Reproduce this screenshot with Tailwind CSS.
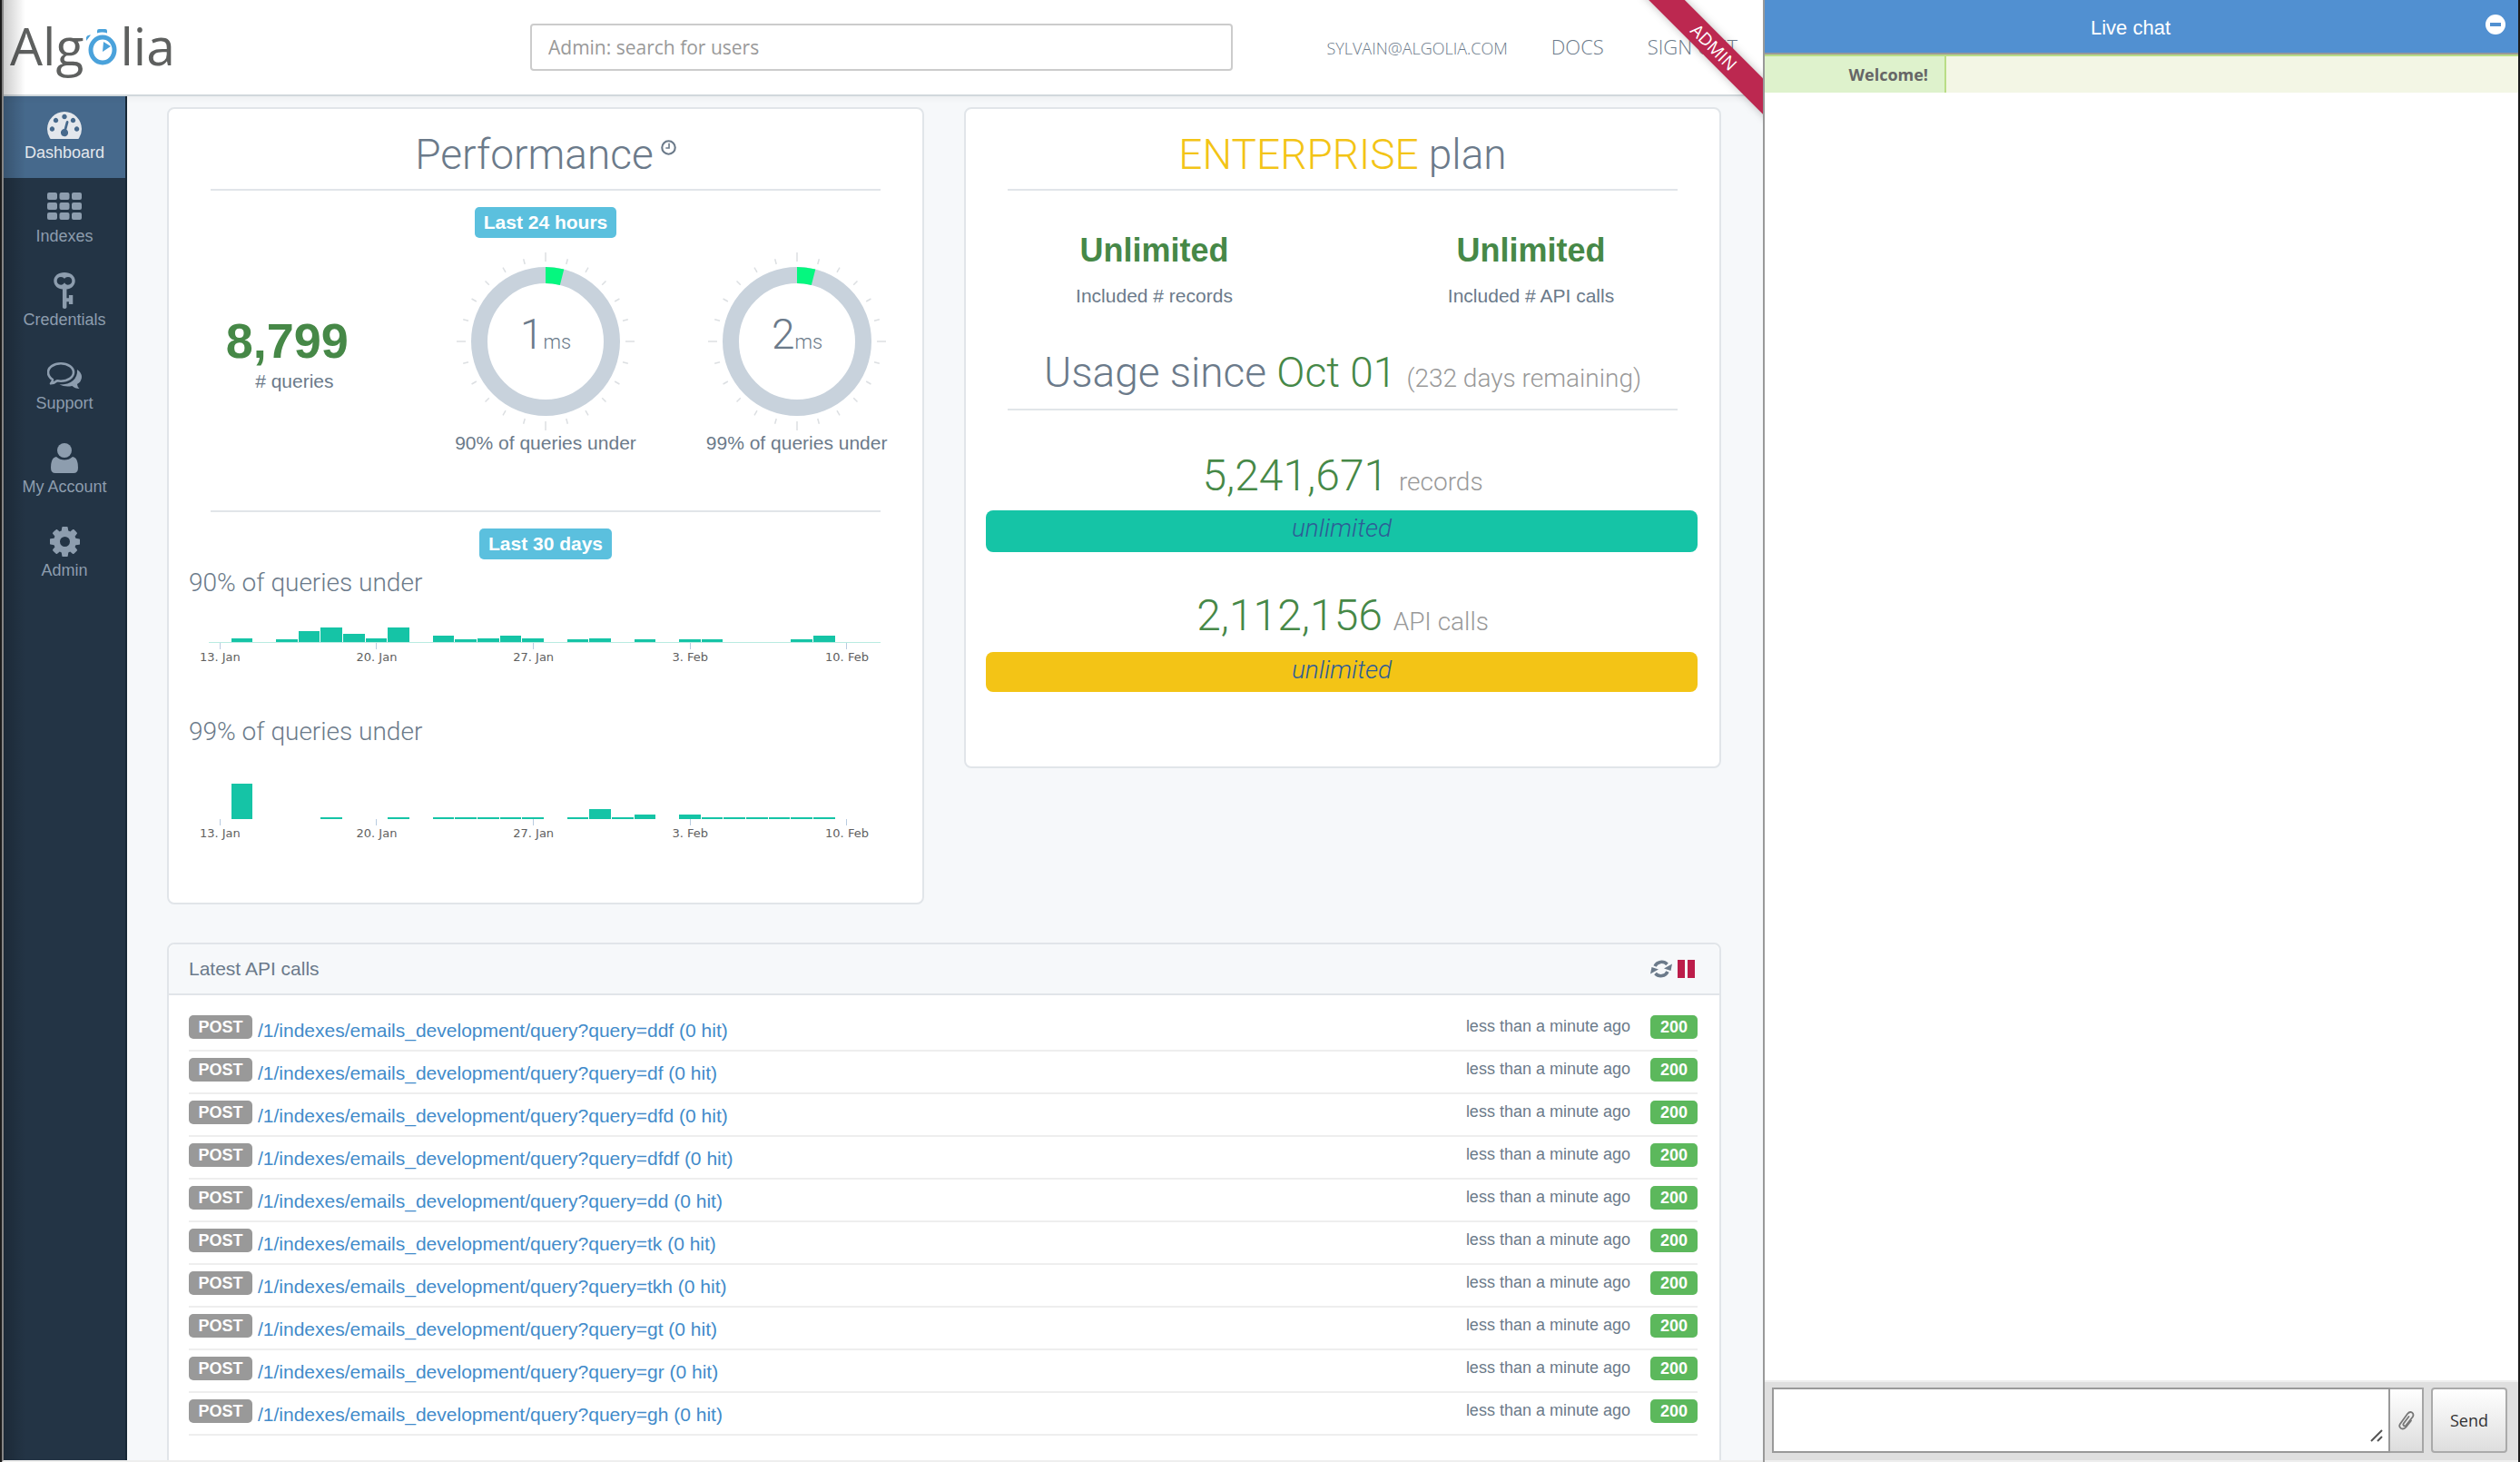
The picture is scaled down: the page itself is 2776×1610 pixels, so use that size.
<!DOCTYPE html>
<html lang="en">
  <head>
    <meta charset="utf-8" />
    <meta content="width=device-width, initial-scale=1.0" name="viewport" />
    <title>Algolia - Dashboard</title>
    <script src="https://cdn.jsdelivr.net/npm/@tailwindcss/browser@4"></script>
  </head>
  <body class="flex h-screen overflow-hidden border-r-2 border-l-2 border-[#1b1b1b] bg-[#f6f8fa] font-['Liberation_Sans',sans-serif] text-[21px] leading-7 text-[#6b7a8a]">
    <div class="relative flex min-w-0 flex-1 flex-col overflow-hidden border-b-2 border-l-2 border-b-[#eeeeee] border-l-[#858585]">
      <!-- Window edge shade -->
      <div class="pointer-events-none absolute inset-y-0 left-0 z-20 w-6 bg-linear-to-r from-black/20 to-transparent"></div>

      <header class="relative flex h-[106px] shrink-0 items-center border-b-2 border-[#d1d8dc] bg-white font-['Open_Sans',sans-serif] shadow-[0_1px_8px_rgba(0,0,0,0.06)]">
        <a href="#" class="flex w-[580px] shrink-0 items-baseline pb-1 pl-[7px] text-[57px] leading-[80px] text-[#5e605f]" aria-label="Algolia">
          <span>Alg</span>
          <svg class="mx-[3px] h-10 w-[34px]" viewBox="0 0 34 40" fill="none">
            <ellipse cx="18" cy="23" rx="13" ry="14" stroke="#4aa2db" stroke-width="5" />
            <path d="M12 4.500V2q0-2 2-2h7q2 0 2 2v2.500q-5.500-2-11 0z" fill="#4aa2db" />
            <path d="M0 13V9q1-3 5-2.500z" fill="#4aa2db" />
            <path d="M19 14l8 5-9 6z" fill="#4aa2db" />
          </svg>
          <span>lia</span>
        </a>
        <label for="search" class="sr-only">Search for users</label>
        <input type="text" id="search" placeholder="Admin: search for users" class="h-[52px] w-[774px] rounded-[4px] border-2 border-[#cccccc] bg-white px-[18px] text-[21px] placeholder:text-[#999999]" />
        <nav class="ml-auto pr-[28px]">
          <ul class="flex items-baseline gap-[48px] text-[22px] font-light">
            <li><a href="#" class="text-[18px]">SYLVAIN@ALGOLIA.COM</a></li>
            <li><a href="#">DOCS</a></li>
            <li><a href="#">SIGN OUT</a></li>
          </ul>
        </nav>
      </header>

      <div class="absolute top-[38px] -right-[46px] z-10 h-7 w-[200px] rotate-45 bg-[#bc2850] text-center font-['Open_Sans',sans-serif] text-[19px] leading-7 text-white shadow-[0_0_10px_rgba(0,0,0,0.25)]">ADMIN</div>

      <div class="flex min-h-0 flex-1">
        <aside class="w-[136px] shrink-0 border-r-2 border-[#172735] bg-[#233445] text-center text-[18px] leading-6 text-[#8d9dae]">
          <ul>
            <li class="h-[92px]">
              <a href="#" class="flex h-[90px] flex-col items-center bg-[#46698c] pt-4 text-[#e3e7ec]">
                <svg class="h-8 w-[38px]" viewBox="0 256 1792 1408" fill="currentColor">
                  <path d="M384 1152q0-53-37.500-90.500t-90.500-37.500-90.500 37.500-37.500 90.500 37.500 90.500 90.500 37.500 90.500-37.500 37.500-90.500zm192-448q0-53-37.500-90.500t-90.500-37.500-90.500 37.500-37.500 90.500 37.500 90.500 90.500 37.500 90.500-37.500 37.500-90.500zm428 481l101-382q6-26-7.500-48.500t-38.500-29.500-48 6.500-30 39.500l-101 382q-60 5-107 43.500t-63 98.500q-20 77 20 146t117 89 146-20 89-117q16-60-6-117t-72-91zm660-33q0-53-37.500-90.500t-90.500-37.500-90.500 37.500-37.500 90.500 37.500 90.500 90.500 37.500 90.500-37.500 37.500-90.500zm-640-640q0-53-37.500-90.500t-90.500-37.500-90.500 37.500-37.500 90.500 37.500 90.500 90.500 37.500 90.500-37.500 37.500-90.500zm448 192q0-53-37.500-90.500t-90.500-37.500-90.500 37.500-37.500 90.500 37.500 90.500 90.500 37.500 90.500-37.500 37.500-90.500zm320 448q0 261-141 483-19 29-54 29h-1402q-35 0-54-29-141-221-141-483 0-182 71-348t191-286 286-191 348-71 348 71 286 191 191 286 71 348z" />
                </svg>
                <span class="mt-[2px]">Dashboard</span>
              </a>
            </li>
            <li class="h-[92px]">
              <a href="#" class="flex flex-col items-center pt-[14px]">
                <svg class="h-[30px] w-[38px]" viewBox="0 0 38 30" fill="currentColor">
                  <rect width="11" height="8" rx="2" /><rect x="13.500" width="11" height="8" rx="2" /><rect x="27" width="11" height="8" rx="2" />
                  <rect y="11" width="11" height="8" rx="2" /><rect x="13.500" y="11" width="11" height="8" rx="2" /><rect x="27" y="11" width="11" height="8" rx="2" />
                  <rect y="22" width="11" height="8" rx="2" /><rect x="13.500" y="22" width="11" height="8" rx="2" /><rect x="27" y="22" width="11" height="8" rx="2" />
                </svg>
                <span class="mt-[6px]">Indexes</span>
              </a>
            </li>
            <li class="h-[92px]">
              <a href="#" class="flex flex-col items-center pt-[10px]">
                <svg class="h-10 w-6" viewBox="0 0 24 41" fill="currentColor">
                  <path fill-rule="evenodd" d="M12 0c7 0 12 4 12 9.500S19 19 14.500 19v10H17v-3.500h4.500V36H17v-3h-2.500v6.500q0 1.500-2.300 1.500t-2.300-1.500V19C5 19 0 15 0 9.500S5 0 12 0zM8 5c-3 0-4.500 2-4.500 4.500S5 14 8 14c2 0 3-1 4-2.500C13 13 14 14 16 14c3 0 4.500-2 4.500-4.500S19 5 16 5c-2 0-3 .800-4 2-1-1.200-2-2-4-2z" />
                </svg>
                <span>Credentials</span>
              </a>
            </li>
            <li class="h-[92px]">
              <a href="#" class="flex flex-col items-center pt-[17px]">
                <svg class="h-[30px] w-[38px]" viewBox="0 0 38 30">
                  <path d="M15 1.300c8 0 14 4.300 14 9.700s-6 9.700-14 9.700q-2 0-4-.400-3 2.700-7 3 2-2 2-4.300C3 17 1 14.300 1 11 1 5.600 7 1.300 15 1.300z" fill="none" stroke="currentColor" stroke-width="2.600" stroke-linejoin="round" />
                  <path d="M33 8q5 3.500 5 8 0 5-5 8 0 2.500 2.500 5-5 0-8-3-8 1.500-14-1.500 10 0 15-4.500T33 8z" fill="currentColor" />
                </svg>
                <span class="mt-[3px]">Support</span>
              </a>
            </li>
            <li class="h-[92px]">
              <a href="#" class="flex flex-col items-center pt-[14px]">
                <svg class="h-[33px] w-[30px]" viewBox="0 0 30 33" fill="currentColor">
                  <circle cx="15" cy="8" r="8" />
                  <path d="M6 15q4 3.500 9 3.500t9-3.500q6 1 6 12 0 6-5 6H5q-5 0-5-6 0-11 6-12z" />
                </svg>
                <span class="mt-[3px]">My Account</span>
              </a>
            </li>
            <li class="h-[92px]">
              <a href="#" class="flex flex-col items-center pt-[14px]">
                <svg class="size-[33px]" viewBox="128 128 1536 1536" fill="currentColor">
                  <path d="M1152 896q0-106-75-181t-181-75-181 75-75 181 75 181 181 75 181-75 75-181zm512-109v222q0 12-8 23t-20 13l-185 28q-19 54-39 91 35 50 107 138 10 12 10 25t-9 23q-27 37-99 108t-94 71q-12 0-26-9l-138-108q-44 23-91 38-16 136-29 186-7 28-36 28h-222q-14 0-24.500-8.500t-11.500-21.500l-28-184q-49-16-90-37l-141 107q-10 9-25 9-14 0-25-11-126-114-165-168-7-10-7-23 0-12 8-23 15-21 51-66.500t54-70.500q-27-50-41-99l-183-27q-13-2-21-12.500t-8-23.500v-222q0-12 8-23t19-13l186-28q14-46 39-92-40-57-107-138-10-12-10-24 0-10 9-23 26-36 98.500-107.500t94.500-71.500q13 0 26 10l138 107q44-23 91-38 16-136 29-186 7-28 36-28h222q14 0 24.500 8.500t11.500 21.500l28 184q49 16 90 37l142-107q9-9 24-9 13 0 25 10 129 119 165 170 7 8 7 22 0 12-8 23-15 21-51 66.500t-54 70.500q26 50 41 98l183 28q13 2 21 12.500t8 23.500z" />
                </svg>
                <span class="mt-[3px]">Admin</span>
              </a>
            </li>
          </ul>
        </aside>

        <main class="min-w-0 flex-1 overflow-hidden pt-3 pr-[46px] pl-11">
          <div class="grid grid-cols-2 items-start gap-11">
            <!-- Performance -->
            <section class="rounded-lg border-2 border-[#e1e5e9] bg-white pt-5 pb-[42px]">
              <h1 class="flex justify-center font-['Roboto',sans-serif] text-[46px] leading-[60px] font-light">
                Performance
                <svg class="mt-[14px] ml-2 size-[17px]" viewBox="0 0 16 16" fill="none" stroke="currentColor" stroke-width="2">
                  <circle cx="8" cy="8" r="6.800" />
                  <path d="M8.500 3.500v5h-3.500" stroke-width="1.500" />
                </svg>
              </h1>
              <hr class="mx-[46px] mt-2 border-t-2 border-[#e1e5e9]" />
              <div class="mt-[18px] flex justify-center">
                <span class="rounded-[5px] bg-[#5bc0de] px-[10px] leading-[34px] font-bold text-white">Last 24 hours</span>
              </div>
              <div class="mt-4 grid grid-cols-3 text-center">
                <div class="pt-[66px]">
                  <p class="pr-4 text-[54px] leading-[62px] font-bold text-[#468847]">8,799</p>
                  <p># queries</p>
                </div>
                <div class="flex flex-col items-center">
                  <svg class="gauge size-[196px]" viewBox="-98 -98 196 196" data-value="1"></svg>
                  <p>90% of queries under</p>
                </div>
                <div class="flex flex-col items-center">
                  <svg class="gauge size-[196px]" viewBox="-98 -98 196 196" data-value="2"></svg>
                  <p>99% of queries under</p>
                </div>
              </div>
              <hr class="mx-[46px] mt-[60px] border-t-2 border-[#e1e5e9]" />
              <div class="mt-[18px] flex justify-center">
                <span class="rounded-[5px] bg-[#5bc0de] px-[10px] leading-[34px] font-bold text-white">Last 30 days</span>
              </div>
              <h2 class="mt-2 px-[22px] font-['Roboto',sans-serif] text-[28px] leading-9 font-light">90% of queries under</h2>
              <div class="mr-[46px] ml-11 h-32">
                <div id="chart-90" class="grid h-12 grid-cols-30 items-end border-b border-[#b9ebe1]"></div>
                <div class="axis grid grid-cols-30"></div>
              </div>
              <h2 class="px-[22px] font-['Roboto',sans-serif] text-[28px] leading-9 font-light">99% of queries under</h2>
              <div class="mr-[46px] ml-11 h-32">
                <div id="chart-99" class="grid h-[78px] grid-cols-30 items-end"></div>
                <div class="axis grid grid-cols-30"></div>
              </div>
            </section>

            <!-- Plan -->
            <section class="rounded-lg border-2 border-[#e1e5e9] bg-white pt-5 pb-[82px] text-center">
              <h1 class="font-['Roboto',sans-serif] text-[46px] leading-[60px] font-light"><span class="text-[#f3c416]">ENTERPRISE</span> plan</h1>
              <hr class="mx-[46px] mt-2 border-t-2 border-[#e1e5e9]" />
              <div class="mt-11 grid grid-cols-2">
                <div>
                  <p class="text-[36px] leading-[44px] font-bold text-[#468847]">Unlimited</p>
                  <p class="mt-[14px]">Included # records</p>
                </div>
                <div>
                  <p class="text-[36px] leading-[44px] font-bold text-[#468847]">Unlimited</p>
                  <p class="mt-[14px]">Included # API calls</p>
                </div>
              </div>
              <h2 class="mt-10 font-['Roboto',sans-serif] text-[46px] leading-[60px] font-light">Usage since <span class="text-[#468847]">Oct 01</span> <small class="text-[28px] leading-none text-[#999999]">(232 days remaining)</small></h2>
              <hr class="mx-[46px] mt-[10px] border-t-2 border-[#e1e5e9]" />
              <p class="mt-[42px] font-['Roboto',sans-serif] text-[48px] leading-[60px] font-light text-[#468847]">5,241,671 <small class="text-[28px] leading-none text-[#999999]">records</small></p>
              <div class="mt-2 mr-6 ml-[22px] h-[46px] rounded-lg bg-[#15c4a6] font-['Roboto',sans-serif] text-[28px] leading-10 font-light text-[#2e5c96] italic">unlimited</div>
              <p class="mt-10 font-['Roboto',sans-serif] text-[48px] leading-[60px] font-light text-[#468847]">2,112,156 <small class="text-[28px] leading-none text-[#999999]">API calls</small></p>
              <div class="mt-[10px] mr-6 ml-[22px] h-11 rounded-lg bg-[#f3c416] font-['Roboto',sans-serif] text-[28px] leading-10 font-light text-[#2e5c96] italic">unlimited</div>
            </section>
          </div>

          <!-- Latest API calls -->
          <section class="mt-[42px] h-[640px] rounded-lg border-2 border-[#e1e5e9] bg-white">
            <div class="flex h-14 items-center rounded-t-lg border-b-2 border-[#e1e5e9] bg-[#f6f8fa] pr-6 pl-[22px]">
              <h2>Latest API calls</h2>
              <button type="button" class="mr-[6px] ml-auto" aria-label="Refresh">
                <svg class="block h-5 w-6" viewBox="0 0 24 20">
                  <path d="M5 7a8 7.500 0 0 1 13.500-2M19 13a8 7.500 0 0 1-13.500 2" fill="none" stroke="currentColor" stroke-width="3.500" />
                  <path d="M24 4.500L22.500 12 15 9.500zM0 15.500L1.500 8 9 10.500z" fill="currentColor" />
                </svg>
              </button>
              <button type="button" class="mr-[3px] flex gap-[3px]" aria-label="Pause">
                <span class="h-5 w-2 bg-[#bc1d4a]"></span>
                <span class="h-5 w-2 bg-[#bc1d4a]"></span>
              </button>
            </div>
            <ul id="calls" class="pt-[15px] pr-6 pl-[22px]"></ul>
          </section>
        </main>
      </div>
    </div>

    <!-- Live chat -->
    <aside class="flex w-[832px] shrink-0 flex-col border-l-2 border-[#999999] bg-white">
      <div class="relative flex h-[60px] shrink-0 items-center justify-center border-b-2 border-[#999999] bg-[#5190d1] pt-1 pr-6 text-[22px] text-white">
        Live chat
        <button type="button" class="absolute top-4 right-[14px] flex size-[22px] items-center justify-center rounded-full bg-white" aria-label="Minimize">
          <span class="h-1 w-3 bg-[#5190d1]"></span>
        </button>
      </div>
      <div class="flex h-[42px] shrink-0 border-t-2 border-[#b9dd86] bg-[#f3f6e5] font-['Open_Sans',sans-serif] text-[18px] font-bold text-[#666666]">
        <div class="flex w-[200px] items-center justify-end border-r-2 border-[#b9dd86] bg-[#def2cc] pr-[18px]">Welcome!</div>
      </div>
      <div class="flex-1"></div>
      <form class="flex h-[90px] shrink-0 border-t-2 border-b-2 border-[#eeeeee] bg-[#dfdfdf] pt-[6px] pr-3 pb-2 pl-2 font-['Open_Sans',sans-serif]">
        <label for="message" class="sr-only">Message</label>
        <div class="relative flex-1">
          <textarea id="message" class="block h-full w-full resize-none border-2 border-[#999999] bg-white"></textarea>
          <svg class="absolute right-2 bottom-3 h-[14px] w-[14px]" viewBox="0 0 14 14" stroke="#555" stroke-width="2"><path d="M1 13L13 1M8 13l5-5" /></svg>
        </div>
        <button type="button" class="flex w-[37px] items-center justify-center border-2 border-l-0 border-[#a5a5a5] bg-linear-to-b from-white to-[#dddddd]" aria-label="Attach">
          <svg class="h-[21px] w-[19px]" viewBox="0 0 19 21" fill="none" stroke="#777" stroke-width="1.800" stroke-linecap="round">
            <path d="M15 10.500l-5.500 7q-2.500 3-5.500 1.500-3-2-1-5L11 3q2.500-3 5-1.500 2.300 1.500 1 4.500l-7.500 9.500q-1.300 1.500-2.500.500t-.200-2.500l5.700-7.500" />
          </svg>
        </button>
        <button type="submit" class="ml-2 w-[84px] rounded-[4px] border-2 border-[#aaaaaa] bg-linear-to-b from-white to-[#dedede] text-[18px] text-[#333333]">Send</button>
      </form>
    </aside>

    <script>
      // Gauges
      document.querySelectorAll(".gauge").forEach((svg) => {
        let ticks = "";
        for (let i = 0; i < 24; i++) {
          ticks += `<line y1="${i % 6 === 0 ? -98 : -94}" y2="-88" transform="rotate(${i * 15})" stroke="#dcdfe2" stroke-width="1.500" />`;
        }
        svg.innerHTML = `${ticks}
          <circle r="73" fill="none" stroke="#c8d2dc" stroke-width="18" />
          <circle r="73" fill="none" stroke="#05f77f" stroke-width="18" pathLength="100" stroke-dasharray="4 96" transform="rotate(-90)" />
          <text y="8" text-anchor="middle" fill="currentColor" class="font-['Roboto',sans-serif] text-[46px] font-light">${svg.dataset.value}<tspan class="text-[22px]">ms</tspan></text>`;
      });

      // Charts, bar heights in pixels for each of the 30 days
      const series = {
        "chart-90": [0, 4, 0, 3, 12, 16, 9, 4, 16, 0, 7, 3, 4, 7, 4, 0, 3, 4, 0, 3, 0, 3, 3, 0, 0, 0, 3, 7, 0, 0],
        "chart-99": [0, 39, 0, 0, 0, 2, 0, 0, 2, 0, 2, 2, 2, 2, 2, 0, 2, 11, 2, 5, 0, 5, 2, 2, 2, 2, 2, 2, 0, 0],
      };
      for (const id in series) {
        document.getElementById(id).innerHTML = series[id].map((h) => `<div class="mr-px bg-[#15c4a6]" style="height: ${h}px"></div>`).join("");
      }

      const days = { 0: "13. Jan", 7: "20. Jan", 14: "27. Jan", 21: "3. Feb", 28: "10. Feb" };
      document.querySelectorAll(".axis").forEach((axis) => {
        for (let i = 0; i < 30; i++) {
          axis.innerHTML += days[i]
            ? `<div class="flex flex-col items-center font-['DejaVu_Sans',sans-serif] text-[13px] leading-4 whitespace-nowrap text-[#606060]"><span class="mb-px h-[7px] w-px bg-[#b8cbe0]"></span>${days[i]}</div>`
            : "<div></div>";
        }
      });

      // Calls
      const queries = ["ddf", "df", "dfd", "dfdf", "dd", "tk", "tkh", "gt", "gr", "gh"];
      document.getElementById("calls").innerHTML = queries
        .map(
          (q) => `<li class="flex h-[47px] items-start border-b-2 border-[#eeeeee] pt-[7px]">
            <span class="w-[70px] rounded-[5px] bg-[#999999] text-center text-[18px] leading-[26px] font-bold text-white">POST</span>
            <a href="#" class="mt-1 ml-[6px] leading-[26px] text-[#428bca]">/1/indexes/emails_development/query?query=${q} (0 hit)</a>
            <span class="mr-[22px] ml-auto text-[18px] leading-6">less than a minute ago</span>
            <span class="w-[52px] rounded-[5px] bg-[#5cb85c] text-center text-[18px] leading-[26px] font-bold text-white">200</span>
          </li>`
        )
        .join("");
    </script>
  </body>
</html>
